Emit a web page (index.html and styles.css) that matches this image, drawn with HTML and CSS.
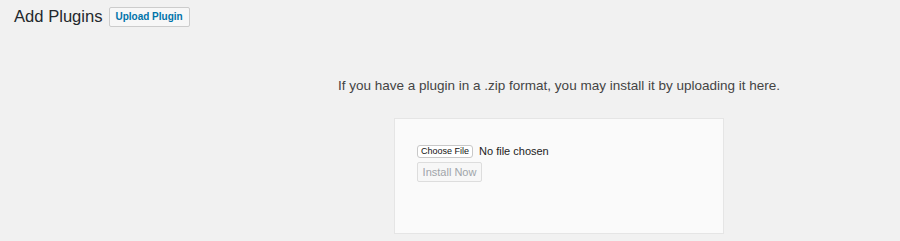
FILE: index.html
```html
<!DOCTYPE html>
<html>
<head>
<meta charset="utf-8">
<link rel="stylesheet" href="styles.css">
</head>
<body>
<div class="wrap">
  <div class="heading-row">
    <h1 class="title">Add Plugins</h1>
    <a class="page-action">Upload Plugin</a>
  </div>
  <div class="upload-area">
    <p class="install-help">If you have a plugin in a .zip format, you may install it by uploading it here.</p>
    <div class="upload-form">
      <div class="file-row">
        <span class="choose-btn">Choose File</span>
        <span class="file-status">No file chosen</span>
      </div>
      <span class="install-btn">Install Now</span>
    </div>
  </div>
</div>
</body>
</html>
```
FILE: styles.css
```css
html, body {
  margin: 0;
  padding: 0;
  background: #f1f1f1;
}
body {
  font-family: "Liberation Sans", Arial, sans-serif;
  color: #444;
  width: 900px;
  height: 241px;
  overflow: hidden;
}
.wrap {
  padding: 7px 0 0 14px;
}
.heading-row {
  display: flex;
  align-items: center;
  gap: 6px;
  height: 20px;
}
.title {
  margin: 0;
  font-size: 16.6px;
  font-weight: 400;
  color: #23282d;
  line-height: 20px;
}
.page-action {
  display: inline-block;
  box-sizing: border-box;
  height: 20px;
  width: 81px;
  text-align: center;
  border: 1px solid #ccc;
  border-radius: 2px;
  background: #f7f7f7;
  color: #0073aa;
  font-size: 10px;
  font-weight: 700;
  line-height: 18px;
}
.upload-area {
  padding-left: 204px;
  display: flex;
  flex-direction: column;
  align-items: center;
}
.install-help {
  margin: 50px 0 0;
  font-size: 13.5px;
  line-height: 18px;
  color: #444;
}
.upload-form {
  box-sizing: border-box;
  width: 330px;
  height: 116px;
  margin-top: 23px;
  background: #fafafa;
  border: 1px solid #e5e5e5;
  padding: 26px 22px;
  display: flex;
  flex-direction: column;
  gap: 4px;
}
.file-row {
  display: flex;
  align-items: center;
  gap: 6px;
  height: 13px;
}
.choose-btn {
  box-sizing: border-box;
  height: 13px;
  padding: 0 3px;
  background: #fff;
  border: 1px solid #c8c8c8;
  border-radius: 3px;
  font-size: 9px;
  line-height: 11px;
  color: #111;
}
.file-status {
  font-size: 11px;
  color: #222;
  line-height: 13px;
}
.install-btn {
  align-self: flex-start;
  box-sizing: border-box;
  height: 20px;
  width: 65px;
  text-align: center;
  border: 1px solid #ddd;
  border-radius: 2px;
  background: #f7f7f7;
  color: #a0a5aa;
  font-size: 11px;
  line-height: 18px;
}
```
